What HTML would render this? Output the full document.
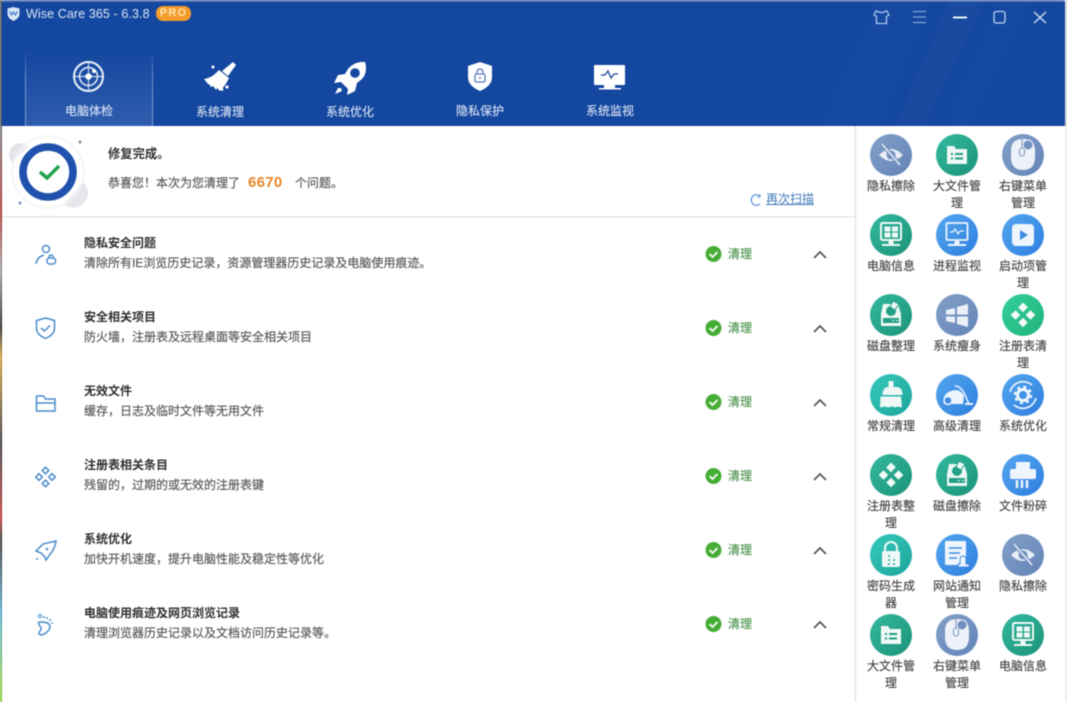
<!DOCTYPE html>
<html lang="zh"><head><meta charset="utf-8"><title>Wise Care 365</title>
<style>
html,body{margin:0;padding:0;background:#fff}
body{width:1067px;height:702px;position:relative;overflow:hidden;font:12px/16px "Liberation Sans","Noto Sans CJK SC",sans-serif;color:#444}
.a{position:absolute;white-space:nowrap}
#wrap{position:absolute;left:0;top:0;width:1067px;height:702px;filter:blur(.4px)}
.nav{position:absolute;top:103px;width:100px;text-align:center;color:#d3dff4;font-size:12px;-webkit-text-stroke:.15px #d3dff4}
.t{position:absolute;left:84px;font-weight:bold;color:#2f2f2f}
.d{position:absolute;left:84px;color:#555;white-space:nowrap;-webkit-text-stroke:.15px #555}
.c{position:absolute;left:728px;color:#4f944f;font-size:12px;-webkit-text-stroke:.15px #4f944f}
.l{position:absolute;width:56px;text-align:center;color:#444;font-size:12px;line-height:16.5px;-webkit-text-stroke:.15px #444}
</style></head><body><div id="wrap">
<div class="a" style="left:0;top:0;width:2px;height:126px;background:#555b66"></div>
<div class="a" style="left:1065px;top:0;width:2px;height:126px;background:#d8d8d8"></div>
<div class="a" style="left:2px;top:0;width:1063px;height:126px;background:#14479f;border-radius:3px 3px 0 0"></div>
<div class="a" style="left:2px;top:0;width:1063px;height:2px;background:#5474b4;border-radius:3px 3px 0 0"></div>
<svg class="a" style="left:0;top:0" width="1065" height="126"><defs><linearGradient id="tab" x1="0" y1="0" x2="0" y2="1"><stop offset="0" stop-color="#14479f"/><stop offset="1" stop-color="#2f5dae"/></linearGradient><linearGradient id="edge" x1="0" y1="0" x2="0" y2="1"><stop offset="0" stop-color="#14479f"/><stop offset=".35" stop-color="#6f92cf"/><stop offset="1" stop-color="#7f9fd6"/></linearGradient></defs>
<polygon points="880,0 930,0 880,126 820,126" fill="#fff" opacity=".012"/><polygon points="950,0 985,0 925,126 895,126" fill="#fff" opacity=".018"/><polygon points="1000,0 1030,0 970,126 945,126" fill="#fff" opacity=".012"/>
<rect x="25" y="50" width="127" height="76" fill="url(#tab)"/><rect x="25" y="50" width="1" height="76" fill="url(#edge)"/><rect x="152" y="50" width="1" height="76" fill="url(#edge)"/>
<path d="M13.500 7l6 1.500v5.500q0 4-6 7q-6-3-6-7v-5.500z" fill="#dce8f8"/><path d="M9.500 11l2 4 2-3 2 3 2-4" fill="none" stroke="#3e79c4" stroke-width="1.200"/>
<g fill="none" stroke="#eef3fb"><circle cx="88.500" cy="76.500" r="14.500" stroke-width="2"/><circle cx="88.500" cy="76.500" r="9" stroke-width="1.400"/><path d="M74 76.500h29M88.500 62v29" stroke-width=".9"/></g><circle cx="88.500" cy="76.500" r="3.200" fill="#fff"/><circle cx="94" cy="71" r="2" fill="#fff"/>
<path d="M222 71l11-9 3 3-8 11zM219 70l10 8-1 2q-3 6-8 11l-3-3-1 2-3-4-2 1-2-3-1 0-4-5q7-1 12-6-0 0 0 0z" fill="#fff"/><circle cx="227" cy="87" r="1.600" fill="#fff"/><circle cx="222" cy="89.500" r="1.400" fill="#fff"/><circle cx="213" cy="67" r="1.500" fill="#fff"/>
<path d="M365 62q-10-1-17 7l-3 5-7 1-4 8 7-1 7 7-1 6 8-4 2-8 5-4q6-7 3-17z" fill="#fff"/><circle cx="355" cy="73" r="4.800" fill="#14479f"/><path d="M335 94l3-6 3 0 1 3z" fill="#fff"/>
<path d="M480 62l12 4v11q0 9-12 14q-12-5-12-14V66z" fill="#fff"/><rect x="475" y="74" width="10" height="8" rx="1.500" fill="none" stroke="#5478b8" stroke-width="1.300"/><path d="M477 74v-2a3 3 0 0 1 6 0v2" fill="none" stroke="#5478b8" stroke-width="1.300"/><circle cx="480" cy="78" r="1" fill="#5478b8"/>
<rect x="594" y="65" width="31" height="20" rx="1" fill="#fff"/><path d="M601 75h4l3-4 3 7 3-4h4" fill="none" stroke="#14479f" stroke-width="1.300"/><rect x="604" y="85" width="11" height="3" fill="#fff"/><rect x="599" y="88" width="22" height="1.500" fill="#fff"/>
<path d="M876 11l4 1.500h-0l3 0 3-1.500 1 0 2 4-2.500 1.500v7h-10v-7l-2.500-1.500 2-4z" fill="none" stroke="#a9c8f0" stroke-width="1.300"/>
<path d="M913 11.500h13M913 17h13M913 22.500h13" stroke="#7fa5dd" stroke-width="1.300"/>
<path d="M953 17.500h14" stroke="#eef4fd" stroke-width="2"/>
<rect x="994" y="11.500" width="11" height="11.500" rx="2" fill="none" stroke="#bcd4f4" stroke-width="1.300"/>
<path d="M1034 12l12 11M1046 12l-12 11" stroke="#d5e3f8" stroke-width="1.300"/>
</svg>
<div class="a" style="left:26px;top:6px;color:#dbe6f7;font-size:12.500px;letter-spacing:.1px">Wise Care 365 - 6.3.8</div>
<div class="a" style="left:156px;top:6px;width:35px;height:15px;line-height:15px;background:#f39b2b;border-radius:7px;text-align:center;color:#fde3b0;font-size:11px;letter-spacing:1.200px;font-weight:bold">PRO</div>
<div class="nav" style="left:39px;top:103px">电脑体检</div><div class="nav" style="left:170px;top:104px">系统清理</div><div class="nav" style="left:300px;top:104px">系统优化</div><div class="nav" style="left:430px">隐私保护</div><div class="nav" style="left:560px">系统监视</div>

<div class="a" style="left:0;top:126px;width:2px;height:576px;background:linear-gradient(#777 0,#a33 15%,#999 25%,#222 35%,#c93 40%,#333 55%,#b33 68%,#333 72%,#5ac 85%,#8c4 97%)"></div>
<div class="a" style="left:2px;top:216px;width:853px;height:1px;background:#e6e6e6"></div><div class="a" style="left:2px;top:217px;width:853px;height:1px;background:#f2f2f2"></div>
<div class="a" style="left:855px;top:126px;width:1px;height:576px;background:#dcdcdc"></div>
<div class="a" style="left:1065px;top:126px;width:2px;height:576px;background:#eee"></div>

<svg class="a" style="left:0;top:126px" width="110" height="90">
<path d="M12 36a10 10 0 0 1 17-15z" fill="#e4e5e8"/><path d="M64 78a13 13 0 0 0 19-22z" fill="#e6e7ea"/>
<circle cx="48" cy="46" r="36" fill="#fff" fill-opacity=".35" stroke="#eef0f4" stroke-width="1.200"/>
<circle cx="48" cy="46" r="25" fill="#fff" stroke="#1f51ad" stroke-width="7.500"/><path d="M40 46l7 6 12-12" fill="none" stroke="#20a34c" stroke-width="3.500"/><circle cx="80" cy="16" r="1.500" fill="#8a93a5"/><circle cx="20" cy="77" r="1.500" fill="#7e93c4"/>
</svg>
<div class="a" style="left:108px;top:146px;font-weight:bold;color:#333;font-size:12.300px">修复完成。</div>
<div class="a" style="left:108px;top:175px;color:#555;-webkit-text-stroke:.15px #555">恭喜您！本次为您清理了</div>
<div class="a" style="left:248px;top:175px;color:#e8832a;font-weight:bold;font-size:15px;letter-spacing:.3px">6670</div>
<div class="a" style="left:295px;top:175px;color:#555;-webkit-text-stroke:.15px #555">个问题。</div>
<svg class="a" style="left:748px;top:193px" width="16" height="14"><path d="M12 3a5.300 5.300 0 1 0 0 8" fill="none" stroke="#5b93d2" stroke-width="1.200"/><path d="M12 1v3h-3" fill="none" stroke="#5b93d2" stroke-width="1"/></svg>
<div class="a" style="left:766px;top:191px;color:#3f79b8;text-decoration:underline">再次扫描</div>

<div class="t" style="top:235px">隐私安全问题</div><div class="d" style="top:255px">清除所有IE浏览历史记录，资源管理器历史记录及电脑使用痕迹。</div>
<div class="t" style="top:309px">安全相关项目</div><div class="d" style="top:329px">防火墙，注册表及远程桌面等安全相关项目</div>
<div class="t" style="top:383px">无效文件</div><div class="d" style="top:403px">缓存，日志及临时文件等无用文件</div>
<div class="t" style="top:457px">注册表相关条目</div><div class="d" style="top:477px">残留的，过期的或无效的注册表键</div>
<div class="t" style="top:531px">系统优化</div><div class="d" style="top:551px">加快开机速度，提升电脑性能及稳定性等优化</div>
<div class="t" style="top:605px">电脑使用痕迹及网页浏览记录</div><div class="d" style="top:625px">清理浏览器历史记录以及文档访问历史记录等。</div>

<svg class="a" style="left:30px;top:236px" width="32" height="410"><g fill="none" stroke="#4a8bcb" stroke-width="1.500">
<circle cx="16" cy="13" r="3.500"/><path d="M6 28q1-7 8-9"/><rect x="17" y="22" width="8.500" height="6" rx="2.500"/><path d="M19 22v-1a2 2 0 0 1 4 0v1"/>
<path d="M15.500 82l9 2.500v8q0 6-9 10q-9-4-9-10v-8z"/><path d="M11 92l3.500 3 5.500-5.500"/>
<path d="M6.500 160h7l2 3h9.500v12H6.500zM6.500 167h18.500"/>
<path d="M15.500 231.200l3.300 3.300-3.300 3.300-3.300-3.300zM9 237.700l3.300 3.300-3.300 3.300-3.300-3.300zM22 237.700l3.300 3.300-3.300 3.300-3.300-3.300zM15.500 244.200l3.300 3.300-3.300 3.300-3.300-3.300z"/>
<path d="M26 305L13 308L6 315L11 317L15 321L16 324L21 317Q25 312 26 305z"/>
<path d="M10 386c3 0 9 0 10 4c0 5-5 8-8 9c-3 0-4-2-2-4c2-2 1-4 0-5c-2-2-2-4 0-4z"/><circle cx="10" cy="380" r="1.600" stroke-width="1"/></g>
<circle cx="17" cy="313" r="1.300" fill="#4a8bcb"/><circle cx="7" cy="323" r="1" fill="#4a8bcb"/>
<g fill="#4a8bcb"><circle cx="14" cy="381" r="1"/><circle cx="17" cy="382" r="1"/><circle cx="20" cy="384" r="1"/><circle cx="22" cy="387" r=".9"/></g></svg>

<svg class="a" style="left:700px;top:240px" width="135" height="400"><defs><g id="ok"><circle cx="13.500" cy="14" r="8" fill="#46ad35"/><path d="M9.500 14l3 3 5-5" fill="none" stroke="#fff" stroke-width="1.800"/></g><path id="up" d="M114 18l6-6 6 6" fill="none" stroke="#555" stroke-width="1.700"/></defs>
<use href="#ok"/><use href="#up"/><use href="#ok" y="74"/><use href="#up" y="74"/><use href="#ok" y="148"/><use href="#up" y="148"/><use href="#ok" y="222"/><use href="#up" y="222"/><use href="#ok" y="296"/><use href="#up" y="296"/><use href="#ok" y="370"/><use href="#up" y="370"/></svg>
<div class="c" style="top:246px">清理</div><div class="c" style="top:320px">清理</div><div class="c" style="top:394px">清理</div><div class="c" style="top:468px">清理</div><div class="c" style="top:542px">清理</div><div class="c" style="top:616px">清理</div>

<svg class="a" style="left:856px;top:126px" width="211" height="576"><defs>
<linearGradient id="g1" x1="0" y1="0" x2="1" y2="1"><stop offset="0" stop-color="#82a0c8"/><stop offset="1" stop-color="#6484b8"/></linearGradient>
<linearGradient id="g2" x1="0" y1="0" x2="1" y2="1"><stop offset="0" stop-color="#33b9a0"/><stop offset="1" stop-color="#1c9378"/></linearGradient>
<linearGradient id="g3" x1="0" y1="0" x2="1" y2="1"><stop offset="0" stop-color="#53a6ee"/><stop offset="1" stop-color="#2f7fe0"/></linearGradient>
<linearGradient id="g4" x1="0" y1="0" x2="1" y2="1"><stop offset="0" stop-color="#33d09a"/><stop offset="1" stop-color="#22b37c"/></linearGradient>
<linearGradient id="g5" x1="0" y1="0" x2="1" y2="1"><stop offset="0" stop-color="#35c8bc"/><stop offset="1" stop-color="#1ea69a"/></linearGradient>
<g id="eye"><circle r="21" fill="url(#g1)"/><path d="M-12 0q12-12 24 0q-12 12-24 0z" fill="#e8eef7"/><circle r="4.500" fill="#7390bf"/><path d="M-9-11l18 21" stroke="#7390bf" stroke-width="4"/><path d="M-9-11l18 21" stroke="#e8eef7" stroke-width="1.500"/></g>
<g id="fold"><circle r="21" fill="url(#g2)"/><path d="M-10-9h7l2 3h11v15h-20z" fill="#eef8f5"/><path d="M-6-1h2M-2-1h8M-6 3.500h2M-2 3.500h8" stroke="#239c82" stroke-width="2"/></g>
<g id="mouse"><circle r="21" fill="url(#g1)"/><path d="M-12-4q0-12 12-12q12 0 12 12v6q0 13-12 13q-12 0-12-13z" fill="#eef2f8"/><path d="M-1-16v9" stroke="#7390bf"/><rect x="-3.500" y="-7" width="5" height="8" rx="2.500" fill="#eef2f8" stroke="#7390bf"/><circle cx="5" cy="-10" r="5" fill="#7390bf" stroke="#eef2f8"/></g>
<g id="pc"><circle r="21" fill="url(#g2)"/><rect x="-10" y="-12" width="20" height="17" rx="1.500" fill="none" stroke="#eef8f5" stroke-width="2"/><path d="M-6.500-8.500h6v5h-6zM1-8.500h6v5h-6zM-6.500-2.500h6v5h-6zM1-2.500h6v5h-6z" fill="#eef8f5"/><path d="M-2.500 6h5v3h-5zM-9 9h18v2h-18z" fill="#eef8f5"/></g>
<g id="mon"><circle r="21" fill="url(#g3)"/><rect x="-10.500" y="-12" width="21" height="17" rx="1" fill="none" stroke="#eef5fd" stroke-width="1.800"/><path d="M-7-3h3l2-3 3 5 2-3h4" fill="none" stroke="#eef5fd" stroke-width="1.200"/><path d="M-2.500 6h5v3h-5zM-9 9h18v2h-18z" fill="#eef5fd"/></g>
<g id="play"><circle r="21" fill="url(#g3)"/><rect x="-11" y="-11" width="22" height="22" rx="4" fill="#eef5fd"/><path d="M-3-5l8 5-8 5z" fill="#3d8de4"/></g>
<g id="disk"><circle r="21" fill="url(#g2)"/><path d="M-8-11h15l3 10v12h-20v-12z" fill="#eef8f5"/><circle cy="-4" r="5" fill="#23a185"/><path d="M2-14l6 3-4 6-5-3z" fill="#eef8f5" stroke="#23a185"/><rect x="-8" y="3" width="16" height="5" fill="#23a185"/><path d="M1 5.500h2M5 5.500h2" stroke="#eef8f5"/></g>
<g id="win"><circle r="21" fill="url(#g1)"/><path d="M-11-5l9-2v6.500h-9zM0-8l11-3v10.500H0zM-11 1.500h9V8l-9-2zM0 1.500h11V12L0 9z" fill="#eaf0f8"/></g>
<g id="dia"><path d="M0-12.500l4.800 4.800L0-2.700l-4.800-4.800zM-7.500-4.800l4.800 4.800L-7.500 4.800-12.300 0zM7.500-4.800l4.800 4.800L7.500 4.800 2.700 0zM0 2.700l4.800 4.800L0 12.300l-4.800-4.800z" fill="#f2fbf8"/></g>
<g id="brm"><circle r="21" fill="url(#g5)"/><path d="M-2.500-14h5v6h3q5 0 6 6l0 2h-20q0-8 6-8h0zM-10.500 1.500h20.500l1 11-4-1-3 1-3-1-4 1-3-1-5 1z" fill="#eef8f7"/></g>
<g id="vac"><circle r="21" fill="url(#g3)"/><path d="M-13 9q-2-10 7-13q9-3 13 5l-1 8z" fill="#eef5fd"/><circle cx="-9" cy="5.500" r="4" fill="#3d8de4" stroke="#eef5fd" stroke-width="1.500"/><path d="M-2-9q6 0 10 9l4 9" fill="none" stroke="#eef5fd" stroke-width="1.500"/><path d="M8 9h8" stroke="#eef5fd" stroke-width="2"/></g>
<g id="gear"><circle r="21" fill="url(#g3)"/><circle r="5.500" fill="none" stroke="#eef5fd" stroke-width="3"/><circle r="8" fill="none" stroke="#eef5fd" stroke-width="2.500" stroke-dasharray="3 3.300"/><path d="M-13-3a13.500 13.500 0 0 1 22-7M13 3a13.500 13.500 0 0 1-22 7" fill="none" stroke="#eef5fd" stroke-width="1.600"/></g>
<g id="prn"><circle r="21" fill="url(#g3)"/><rect x="-7" y="-13" width="14" height="7" fill="#eef5fd"/><rect x="-13" y="-6" width="26" height="10" rx="2" fill="#eef5fd"/><path d="M-6 5v8M-1 5v8M4 5v8" stroke="#eef5fd" stroke-width="2.500"/></g>
<g id="lock"><circle r="21" fill="url(#g5)"/><rect x="-9" y="-4" width="18" height="16" rx="2" fill="#eef8f7"/><path d="M-6-4v-3a6 6 0 0 1 12 0v3" fill="none" stroke="#eef8f7" stroke-width="2"/><path d="M-3 1h2M-3 5h2M-3 9h2M2 5h2M2 9h2" stroke="#1ea69a" stroke-width="1.500"/></g>
<g id="web"><circle r="21" fill="url(#g3)"/><rect x="-12" y="-14" width="21" height="24" rx="1" fill="#eef5fd"/><path d="M-8-7h13M-8-2h11M-8 3h8" stroke="#3d8de4" stroke-width="1.500"/><path d="M6 1q3 0 3 4v4h3v3H1V9h2V5q0-4 3-4z" fill="#eef5fd" stroke="#3d8de4"/></g>
</defs>
<use href="#eye" x="35" y="29"/><use href="#fold" x="101" y="29"/><use href="#mouse" x="167" y="29"/>
<use href="#pc" x="35" y="109"/><use href="#mon" x="101" y="109"/><use href="#play" x="167" y="109"/>
<use href="#disk" x="35" y="189"/><use href="#win" x="101" y="189"/><circle cx="167" cy="189" r="21" fill="url(#g4)"/><use href="#dia" x="167" y="189"/>
<use href="#brm" x="35" y="269"/><use href="#vac" x="101" y="269"/><use href="#gear" x="167" y="269"/>
<circle cx="35" cy="349" r="21" fill="url(#g2)"/><use href="#dia" x="35" y="349"/><use href="#disk" x="101" y="349"/><use href="#prn" x="167" y="349"/>
<use href="#lock" x="35" y="429"/><use href="#web" x="101" y="429"/><use href="#eye" x="167" y="429"/>
<use href="#fold" x="35" y="509"/><use href="#mouse" x="101" y="509"/><use href="#pc" x="167" y="509"/>
</svg>

<div class="l" style="left:863px;top:178px">隐私擦除</div><div class="l" style="left:929px;top:178px;">大文件管<br>理</div><div class="l" style="left:995px;top:178px">右键菜单<br>管理</div>
<div class="l" style="left:863px;top:258px">电脑信息</div><div class="l" style="left:929px;top:258px">进程监视</div><div class="l" style="left:995px;top:258px">启动项管<br>理</div>
<div class="l" style="left:863px;top:338px">磁盘整理</div><div class="l" style="left:929px;top:338px">系统瘦身</div><div class="l" style="left:995px;top:338px">注册表清<br>理</div>
<div class="l" style="left:863px;top:418px">常规清理</div><div class="l" style="left:929px;top:418px">高级清理</div><div class="l" style="left:995px;top:418px">系统优化</div>
<div class="l" style="left:863px;top:498px">注册表整<br>理</div><div class="l" style="left:929px;top:498px">磁盘擦除</div><div class="l" style="left:995px;top:498px">文件粉碎</div>
<div class="l" style="left:863px;top:578px">密码生成<br>器</div><div class="l" style="left:929px;top:578px">网站通知<br>管理</div><div class="l" style="left:995px;top:578px">隐私擦除</div>
<div class="l" style="left:863px;top:658px">大文件管<br>理</div><div class="l" style="left:929px;top:658px">右键菜单<br>管理</div><div class="l" style="left:995px;top:658px">电脑信息</div>
</div></body></html>
